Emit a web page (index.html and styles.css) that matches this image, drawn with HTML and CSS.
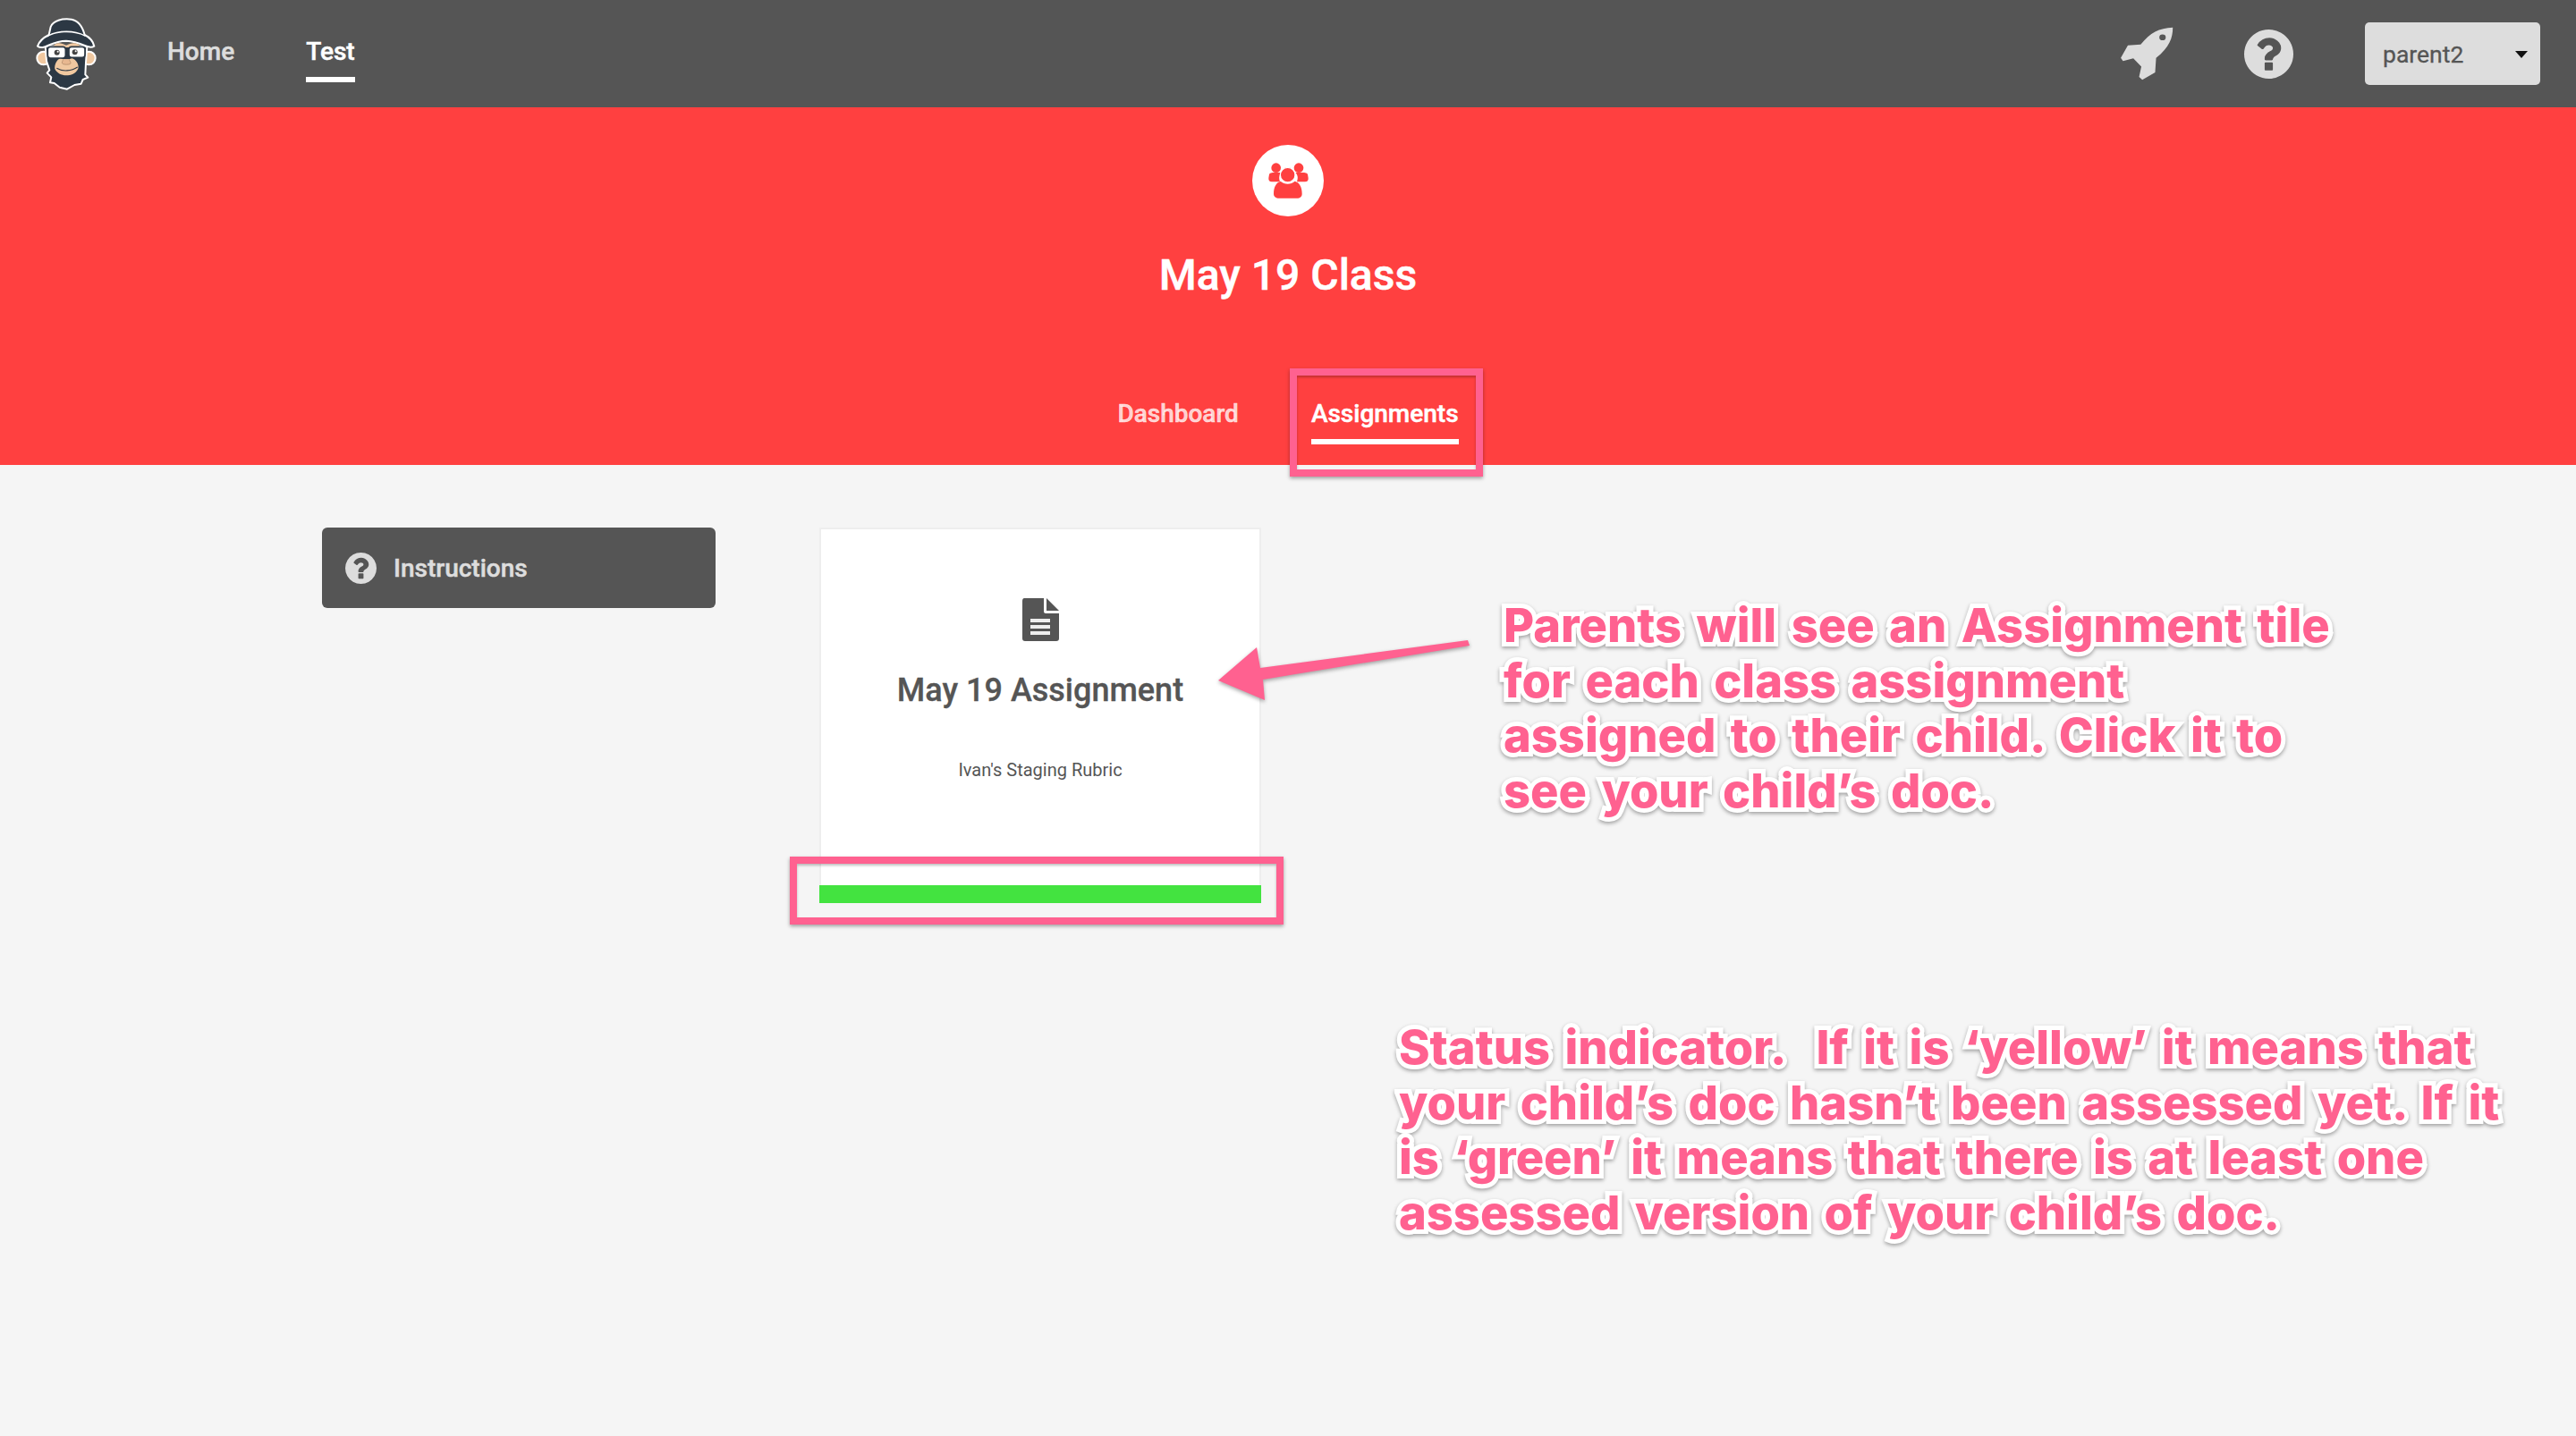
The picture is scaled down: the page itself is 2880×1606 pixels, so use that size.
FILE: index.html
```html
<!DOCTYPE html>
<html lang="en">
<head>
<meta charset="utf-8">
<title>May 19 Class</title>
<link rel="stylesheet" href="styles.css">
</head>
<body>
<header class="nav">
  <svg class="logo" viewBox="0 0 270 270" aria-hidden="true">
    <g stroke="#fff" stroke-width="6" stroke-linejoin="round">
      <circle cx="56" cy="150" r="22" fill="#f0c8a0"/>
      <circle cx="208" cy="150" r="22" fill="#f0c8a0"/>
      <path d="M62 110 L202 110 L198 165 L196 205 L205 215 L188 222 L182 236 L160 240 L135 254 L110 248 L92 234 L78 232 L82 214 L68 200 L76 190 L66 160 Z" fill="#2c3844"/>
      <path d="M36 110 C42 92 58 80 74 72 L80 45 C88 24 118 16 150 20 C172 24 186 42 194 72 C210 80 222 92 226 110 C205 122 190 96 132 92 C80 92 58 126 36 110 Z" fill="#2c3844"/>
    </g>
    <path d="M68 80 C100 60 160 58 196 78 L195 73 C160 54 104 54 70 74 Z" fill="#fff"/>
    <path d="M92 106 C104 96 118 100 132 108 C146 100 160 96 176 106 L176 114 L92 114 Z" fill="#f0c8a0"/>
    <path d="M112 150 C120 155 145 155 152 150 C166 156 176 172 172 186 C164 202 148 208 132 208 C116 208 100 200 94 186 C92 172 100 156 112 150 Z" fill="#f0c8a0"/>
    <path d="M100 184 C120 196 150 194 170 180" fill="none" stroke="#2c3844" stroke-width="3.5"/>
    <path d="M122 154 C118 164 116 168 122 170 C128 172 138 172 144 170 C150 168 146 164 142 154" fill="#e8b890" stroke="#a58060" stroke-width="2"/>
    <rect x="70" y="112" width="60" height="38" rx="9" fill="#fff" stroke="#2c3844" stroke-width="5"/>
    <rect x="141" y="112" width="54" height="36" rx="9" fill="#fff" stroke="#2c3844" stroke-width="5"/>
    <circle cx="101" cy="131" r="9" fill="#444"/>
    <circle cx="161" cy="130" r="9" fill="#444"/>
    <circle cx="104" cy="128" r="3" fill="#fff"/>
    <circle cx="164" cy="127" r="3" fill="#fff"/>
  </svg>
  <nav class="nav-links">
    <a class="nav-link">Home</a>
    <a class="nav-link nav-link-active">Test</a>
  </nav>
  <div class="nav-right">
    <svg class="rocket" viewBox="140 90 170 185" preserveAspectRatio="none" aria-hidden="true">
      <path fill-rule="evenodd" d="M305 95 C262 97 235 112 205 152 L165 155 L143 197 L150 207 L182 198 L207 226 L200 260 L210 270 L250 245 L253 197 C295 160 305 130 305 95 Z M273 118 A10 10 0 1 0 273.1 138 A10 10 0 1 0 273 118 Z" fill="#ddd"/>
    </svg>
    <svg class="help-icon" viewBox="128 128 1536 1536" aria-hidden="true">
      <path fill="#ddd" d="M1024 1376v-192q0-14-9-23t-23-9h-192q-14 0-23 9t-9 23v192q0 14 9 23t23 9h192q14 0 23-9t9-23zm256-672q0-88-55.5-163t-138.5-116-170-41q-243 0-371 213-15 24 8 42l132 100q7 6 19 6 16 0 25-12 53-68 86-92 34-24 86-24 48 0 85.5 26t37.5 59q0 38-20 61t-68 45q-63 28-115.5 86.5t-52.5 125.5v36q0 14 9 23t23 9h192q14 0 23-9t9-23q0-19 21.5-49.5t54.5-49.5q32-18 49-28.5t46-35 44.5-48 28-60.5 12.5-81zm384 192q0 209-103 385.5t-279.5 279.5-385.5 103-385.5-103-279.5-279.5-103-385.5 103-385.5 279.5-279.5 385.5-103 385.5 103 279.5 279.5 103 385.5z"/>
    </svg>
    <div class="user-select">
      <span>parent2</span>
      <span class="caret"></span>
    </div>
  </div>
</header>

<section class="hero">
  <div class="class-badge">
    <svg class="group-icon" viewBox="0 -9 240 240" aria-hidden="true">
      <g fill="#ff4040">
        <circle cx="80" cy="68" r="16"/>
        <circle cx="156" cy="68" r="16"/>
        <path d="M57 90 C60 84 70 84 78 84 L98 84 C88 95 90 105 93 115 L66 115 C58 115 54 110 55 102 Z"/>
        <path d="M186 90 C183 84 173 84 165 84 L145 84 C155 95 153 105 150 115 L177 115 C185 115 189 110 188 102 Z"/>
        <path d="M72 155 C72 130 82 117 95 113 C108 125 130 125 143 113 C157 117 167 130 167 155 C167 165 160 170 150 170 L90 170 C80 170 72 165 72 155 Z"/>
      </g>
      <circle cx="119" cy="92" r="25" fill="#ff4040" stroke="#fff" stroke-width="4"/>
    </svg>
  </div>
  <h1 class="class-title">May 19 Class</h1>
  <div class="tabs">
    <a class="tab">Dashboard</a>
    <a class="tab tab-active">Assignments</a>
  </div>
</section>

<main class="content">
  <aside class="sidebar">
    <button class="instructions">
      <svg class="instructions-icon" viewBox="128 128 1536 1536" aria-hidden="true">
        <path fill="#ddd" d="M1024 1376v-192q0-14-9-23t-23-9h-192q-14 0-23 9t-9 23v192q0 14 9 23t23 9h192q14 0 23-9t9-23zm256-672q0-88-55.5-163t-138.5-116-170-41q-243 0-371 213-15 24 8 42l132 100q7 6 19 6 16 0 25-12 53-68 86-92 34-24 86-24 48 0 85.5 26t37.5 59q0 38-20 61t-68 45q-63 28-115.5 86.5t-52.5 125.5v36q0 14 9 23t23 9h192q14 0 23-9t9-23q0-19 21.5-49.5t54.5-49.5q32-18 49-28.5t46-35 44.5-48 28-60.5 12.5-81zm384 192q0 209-103 385.5t-279.5 279.5-385.5 103-385.5-103-279.5-279.5-103-385.5 103-385.5 279.5-279.5 385.5-103 385.5 103 279.5 279.5 103 385.5z"/>
      </svg>
      <span>Instructions</span>
    </button>
  </aside>
  <article class="card">
    <div class="card-body">
      <svg class="doc-icon" viewBox="0 0 41 48" aria-hidden="true">
        <path fill="#555" d="M2 0 L24 0 L24 15 C24 16 25 17 26 17 L41 17 L41 45 C41 47 40 48 38 48 L3 48 C1 48 0 47 0 45 L0 3 C0 1 1 0 2 0 Z"/>
        <path fill="#555" d="M27 0 L41 14 L27 14 Z"/>
        <rect x="9" y="23" width="22" height="4" fill="#eee"/>
        <rect x="9" y="30" width="22" height="4" fill="#eee"/>
        <rect x="9" y="37" width="22" height="4" fill="#eee"/>
      </svg>
      <h2 class="card-title">May 19 Assignment</h2>
      <p class="card-sub">Ivan's Staging Rubric</p>
    </div>
    <div class="card-status"></div>
  </article>
</main>

<div class="mark mark-tab"></div>
<div class="mark mark-status"></div>
<svg class="arrow" viewBox="0 0 300 80" aria-hidden="true">
  <path d="M2 51 L45 14 L49 37 L281 6 L283 12 L52 50 L54 73 Z" fill="#ff6190"/>
</svg>
<p class="note note-tile">Parents will see an Assignment tile<br>for each class assignment<br>assigned to their child. Click it to<br>see your child’s doc.</p>
<p class="note note-status">Status indicator.&nbsp; If it is ‘yellow’ it means that<br>your child’s doc hasn’t been assessed yet. If it<br>is ‘green’ it means that there is at least one<br>assessed version of your child’s doc.</p>
</body>
</html>
```

FILE: styles.css
```css
* { box-sizing: border-box; }
html, body { margin: 0; height: 100%; }
body {
  position: relative;
  min-height: 1606px;
  overflow: hidden;
  background: #f5f5f5;
  font-family: Roboto, "Liberation Sans", sans-serif;
  color: #555;
}
.nav {
  display: flex;
  align-items: center;
  height: 120px;
  padding: 0 40px 0 30px;
  background: #555;
}
.logo { width: 90px; height: 90px; flex: none; }
.nav-links {
  display: flex;
  align-self: flex-start;
  gap: 80px;
  margin-left: 67px;
  padding-top: 42px;
}
.nav-link {
  padding-bottom: 12px;
  border-bottom: 6px solid transparent;
  font-size: 28px;
  font-weight: 500;
  line-height: 32px;
  color: #ddd;
  -webkit-text-stroke: 0.5px currentColor;
}
.nav-link-active { color: #fff; border-bottom-color: #fff; }
.nav-right { display: flex; align-items: center; margin-left: auto; }
.rocket { width: 61px; height: 62px; }
.help-icon { width: 55px; height: 55px; margin-left: 78px; }
.user-select {
  display: flex;
  align-items: center;
  justify-content: space-between;
  width: 196px;
  height: 70px;
  margin-left: 80px;
  padding: 1px 14px 0 20px;
  border-radius: 5px;
  background: #ddd;
  font-size: 26.5px;
  color: #555;
  -webkit-text-stroke: 0.3px currentColor;
}
.caret {
  width: 0;
  height: 0;
  border-left: 7px solid transparent;
  border-right: 7px solid transparent;
  border-top: 8px solid #111;
}
.hero {
  display: flex;
  flex-direction: column;
  align-items: center;
  height: 400px;
  padding-top: 42px;
  background: #ff4040;
  color: #fff;
}
.class-badge {
  width: 80px;
  height: 80px;
  border-radius: 50%;
  background: #fff;
}
.group-icon { display: block; width: 80px; height: 80px; }
.class-title {
  margin: 38px 0 0;
  font-size: 48px;
  font-weight: 500;
  line-height: 56px;
  -webkit-text-stroke: 0.5px currentColor;
}
.tabs { display: flex; gap: 81px; margin-top: 110px; }
.tab {
  padding: 0 0 11px;
  border-bottom: 6px solid transparent;
  font-size: 28px;
  font-weight: 500;
  line-height: 34px;
  color: rgba(255, 255, 255, 0.75);
  -webkit-text-stroke: 0.5px currentColor;
}
.tab-active { color: #fff; border-bottom-color: #fff; }
.content {
  display: flex;
  gap: 116px;
  padding: 70px 0 0 360px;
}
.sidebar { width: 440px; flex: none; }
.instructions {
  display: flex;
  align-items: center;
  gap: 19px;
  width: 100%;
  height: 90px;
  padding: 0 0 0 26px;
  border: 0;
  border-radius: 6px;
  background: #555;
  font-family: inherit;
  font-size: 28px;
  font-weight: 500;
  color: #ddd;
  -webkit-text-stroke: 0.5px currentColor;
}
.instructions-icon { width: 35px; height: 35px; }
.card {
  display: flex;
  flex-direction: column;
  width: 494px;
  height: 420px;
}
.card-body {
  flex: 1;
  display: flex;
  flex-direction: column;
  align-items: center;
  padding-top: 77px;
  border: 2px solid #eee;
  border-bottom: 0;
  background: #fff;
}
.doc-icon { width: 41px; height: 48px; }
.card-title {
  margin: 33px 0 0;
  font-size: 36px;
  font-weight: 500;
  line-height: 44px;
  color: #555;
  -webkit-text-stroke: 0.3px currentColor;
}
.card-sub {
  margin: 53px 0 0;
  font-size: 20px;
  line-height: 28px;
  color: #555;
}
.card-status { height: 20px; background: #43e340; }
.mark {
  position: absolute;
  border: 8px solid #ff6190;
  box-shadow: 0 2px 4px rgba(0, 0, 0, 0.35), inset 0 2px 3px rgba(0, 0, 0, 0.25);
}
.mark-tab { left: 1442px; top: 412px; width: 216px; height: 121px; }
.mark-status { left: 883px; top: 958px; width: 552px; height: 76px; }
.arrow {
  position: absolute;
  left: 1360px;
  top: 710px;
  width: 300px;
  height: 80px;
  filter: drop-shadow(0 2px 2px rgba(0, 0, 0, 0.35));
}
.note {
  position: absolute;
  margin: 0;
  font-family: Inter, "Liberation Sans", sans-serif;
  font-size: 52.4px;
  font-weight: 800;
  word-spacing: 5px;
  line-height: 61.7px;
  white-space: nowrap;
  color: #ff6190;
  -webkit-text-stroke: 10px #fff;
  paint-order: stroke fill;
  filter: drop-shadow(0 2px 2px rgba(0, 0, 0, 0.35));
}
.note-tile { left: 1681px; top: 669px; }
.note-status { left: 1564px; top: 1141px; }
```
